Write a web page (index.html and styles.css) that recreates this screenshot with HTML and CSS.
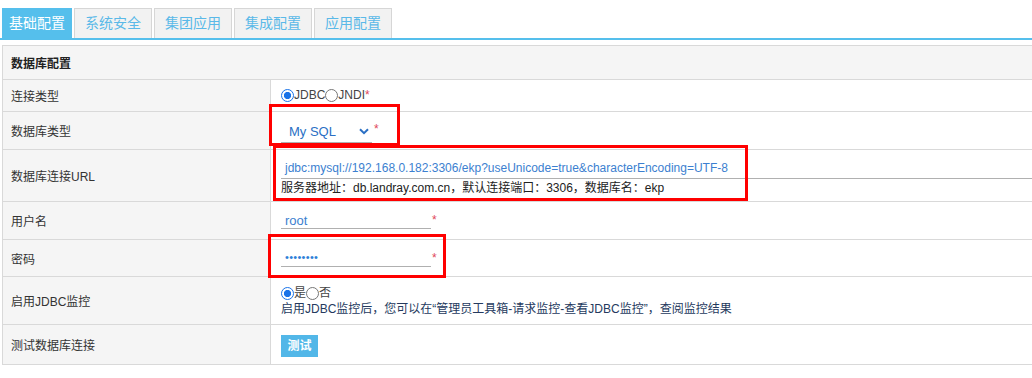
FILE: index.html
```html
<!DOCTYPE html>
<html lang="zh-CN">
<head>
<meta charset="utf-8">
<title>数据库配置</title>
<link rel="stylesheet" href="styles.css">
</head>
<body>
<div class="page">
  <span class="cut-link">返回配置页</span>
  <div class="tabs">
    <div class="tab active">基础配置</div>
    <div class="tab">系统安全</div>
    <div class="tab">集团应用</div>
    <div class="tab">集成配置</div>
    <div class="tab">应用配置</div>
  </div>
  <table class="conf">
    <tr class="r-head"><td colspan="2" class="head">数据库配置</td></tr>
    <tr class="r1">
      <td class="lab">连接类型</td>
      <td class="val"><span class="opt"><span class="radio on"></span>JDBC<span class="radio"></span>JNDI<span class="req">*</span></span></td>
    </tr>
    <tr class="r2">
      <td class="lab">数据库类型</td>
      <td class="val"><span class="sel">My SQL<svg class="chev" width="10" height="7" viewBox="0 0 10 7"><path d="M1 1.2 L5 5.2 L9 1.2" fill="none" stroke="#2a6fc4" stroke-width="2"/></svg></span><span class="req sreq">*</span></td>
    </tr>
    <tr class="r3">
      <td class="lab">数据库连接URL</td>
      <td class="val">
        <div class="url">jdbc:mysql://192.168.0.182:3306/ekp?useUnicode=true&amp;characterEncoding=UTF-8</div>
        <div class="hint">服务器地址：db.landray.com.cn，默认连接端口：3306，数据库名：ekp</div>
      </td>
    </tr>
    <tr class="r4">
      <td class="lab">用户名</td>
      <td class="val top"><div class="field"><span class="inp user">root</span><span class="req ireq">*</span></div></td>
    </tr>
    <tr class="r5">
      <td class="lab">密码</td>
      <td class="val top"><div class="field"><span class="inp pwd">••••••••</span><span class="req ireq">*</span></div></td>
    </tr>
    <tr class="r6">
      <td class="lab">启用JDBC监控</td>
      <td class="val">
        <div class="opt"><span class="radio on"></span>是<span class="radio"></span>否</div>
        <div class="desc">启用JDBC监控后，您可以在“管理员工具箱-请求监控-查看JDBC监控”，查阅监控结果</div>
      </td>
    </tr>
    <tr class="r7">
      <td class="lab">测试数据库连接</td>
      <td class="val"><span class="btn">测试</span></td>
    </tr>
  </table>
  <div class="mark m1"></div>
  <div class="mark m2"></div>
  <div class="mark m3"></div>
</div>
</body>
</html>
```

FILE: styles.css
```css
html, body {
  margin: 0;
  padding: 0;
  background: #fff;
  overflow: hidden;
}
body {
  font-family: "Liberation Sans", Arial, "Noto Sans CJK SC", sans-serif;
  font-size: 12px;
  color: #333;
}
.page {
  position: relative;
  width: 1032px;
  height: 378px;
  overflow: hidden;
}
.cut-link {
  position: absolute;
  left: 870px;
  top: -18px;
  font-size: 14px;
  line-height: 17px;
  color: #3aa2dc;
}
.tabs {
  display: flex;
  gap: 2px;
  padding: 8px 0 0 2px;
  border-bottom: 2px solid #55bfec;
}
.tab {
  box-sizing: border-box;
  width: 78px;
  height: 30px;
  line-height: 28px;
  text-align: center;
  font-size: 14px;
  color: #5ab9e8;
  background: #f2f2f2;
  border: 1px solid #d6d6d6;
  border-bottom: none;
}
.tab.active {
  width: 70px;
  background: #55bfec;
  border-color: #55bfec;
  color: #fff;
}
.conf {
  margin: 5px 0 0 2px;
  width: 1060px;
  border-collapse: collapse;
  border: 1px solid #d9d9d9;
}
.conf td {
  border: 1px solid #d9d9d9;
  padding: 0;
  vertical-align: middle;
}
.head {
  background: #f5f5f5;
  font-weight: bold;
  padding-left: 8px !important;
  color: #222;
}
.lab {
  width: 259px;
  background: #f5f5f5;
  padding-left: 8px !important;
  color: #333;
}
.val {
  padding-left: 10px !important;
  background: #fff;
}
.val.top {
  vertical-align: top;
  padding-top: 6px !important;
}
.r-head { height: 34px; }
.r1 { height: 32px; }
.r2 { height: 38px; }
.r3 { height: 52px; }
.r4 { height: 38px; }
.r5 { height: 37px; }
.r6 { height: 48px; }
.r7 { height: 40px; }
.r1 .val { vertical-align: top; padding-top: 8px !important; }
.opt {
  display: flex;
  align-items: center;
  color: #444;
  line-height: 14px;
}
.radio {
  box-sizing: border-box;
  width: 13px;
  height: 13px;
  border-radius: 50%;
  border: 1px solid #767676;
  background: #fff;
}
.radio.on {
  border: 1.5px solid #1a73e8;
  background: radial-gradient(circle, #1a73e8 0 3.3px, #fff 3.9px);
}
.req { color: #e0475a; font-size: 12px; }
.sel {
  display: inline-flex;
  align-items: center;
  justify-content: space-between;
  box-sizing: border-box;
  width: 91px;
  height: 22px;
  padding: 0 3px 0 8px;
  border-bottom: 1px solid #b0b0b0;
  color: #2a6fc4;
  font-size: 13px;
  vertical-align: middle;
  margin-top: 2px;
}
.chev { margin-top: 1px; }
.sreq { margin-left: 2px; vertical-align: middle; position: relative; top: -2px; }
.url {
  box-sizing: border-box;
  width: 770px;
  height: 24px;
  line-height: 26px;
  padding-left: 4px;
  border-bottom: 1px solid #b0b0b0;
  color: #3c7fd0;
  font-size: 12px;
  margin-top: 1px;
}
.hint {
  line-height: 18px;
  color: #222;
}
.field {
  display: flex;
  align-items: flex-start;
}
.inp {
  display: block;
  box-sizing: border-box;
  width: 150px;
  height: 21px;
  line-height: 20px;
  padding-left: 4px;
  border-bottom: 1px solid #b0b0b0;
  color: #3c7fd0;
  font-size: 13px;
}
.user {
  line-height: 25px;
}
.pwd {
  font-size: 11px;
  letter-spacing: 0.3px;
  color: #2d7fd8;
  line-height: 22px;
}
.ireq {
  display: block;
  line-height: 12px;
  margin: 6px 0 0 1px;
}
.r6 .val { padding-top: 3px !important; }
.desc {
  line-height: 18px;
  color: #253a5e;
}
.btn {
  display: inline-block;
  width: 37px;
  height: 22px;
  line-height: 22px;
  text-align: center;
  background: #52b7e8;
  color: #fff;
  font-weight: bold;
  font-size: 12px;
  margin-top: 2px;
}
.mark {
  position: absolute;
  border: 3px solid #f00;
  box-sizing: border-box;
}
.m1 { left: 269px; top: 104px; width: 131px; height: 42px; }
.m2 { left: 273px; top: 145px; width: 475px; height: 56px; }
.m3 { left: 268px; top: 234px; width: 178px; height: 44px; }
```
